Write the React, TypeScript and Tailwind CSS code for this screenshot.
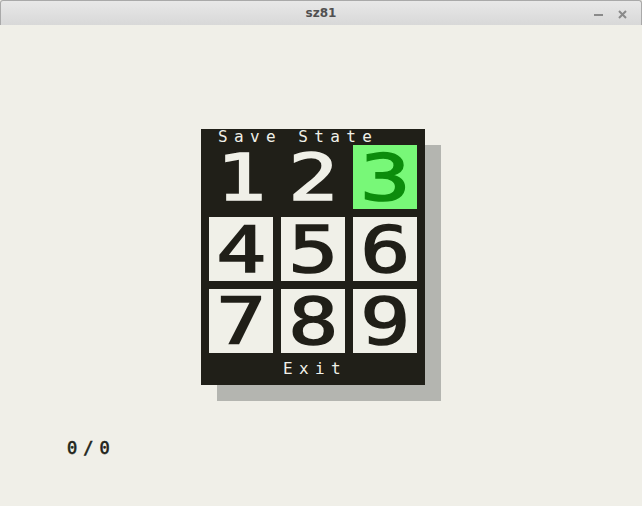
import React from 'react';

const mono = "font-['DejaVu_Sans_Mono','Liberation_Mono',monospace]";

function Tile({ n, variant }: { n: number; variant: 'dark' | 'light' | 'active' }) {
  const tone =
    variant === 'active'
      ? 'bg-[#78f878] text-[#0c8c0c]'
      : variant === 'light'
        ? 'bg-[#f0f0e8] text-[#201f18]'
        : 'bg-[#201f18] text-[#f0f0e8]';
  return (
    <div className={`w-[64px] h-[64px] flex items-center justify-center ${tone}`}>
      <span
        className={`${mono} text-[64px] leading-none scale-x-[1.3] translate-y-[1px] [-webkit-text-stroke:1.6px_currentColor]`}
      >
        {n}
      </span>
    </div>
  );
}

export default function App() {
  const tiles: { n: number; variant: 'dark' | 'light' | 'active' }[] = [
    { n: 1, variant: 'dark' },
    { n: 2, variant: 'dark' },
    { n: 3, variant: 'active' },
    { n: 4, variant: 'light' },
    { n: 5, variant: 'light' },
    { n: 6, variant: 'light' },
    { n: 7, variant: 'light' },
    { n: 8, variant: 'light' },
    { n: 9, variant: 'light' },
  ];

  return (
    <div className="w-[642px] h-[506px] flex flex-col bg-[#f0efe8] overflow-hidden">
      {/* title bar */}
      <div className="h-[25px] shrink-0 relative flex items-center justify-center bg-gradient-to-b from-[#e8e8e8] to-[#d8d8d8] border border-b-0 border-[#a9a9a9] rounded-t-[3px]">
        <span className="font-['DejaVu_Sans',sans-serif] font-bold text-[12px] text-[#505050]">sz81</span>
        <div className="absolute right-[14px] top-0 h-full flex items-center gap-[15px]">
          <span className="block w-[9px] h-[2px] bg-[#8a8a8a] mt-[3px]" />
          <svg width="9" height="9" viewBox="0 0 9 9" className="mt-[2px]">
            <path d="M1 1 L8 8 M8 1 L1 8" stroke="#8a8a8a" strokeWidth="2" />
          </svg>
        </div>
      </div>

      {/* emulator screen */}
      <div className="flex-1 flex flex-col pl-[201px] pt-[104px]">
        <div className="w-[224px] h-[256px] bg-[#201f18] flex flex-col shadow-[16px_16px_0_#b4b5b0]">
          <div className={`h-[16px] pl-[17px] flex items-center text-[16px] leading-none tracking-[6.4px] text-[#f0f0e8] ${mono}`}>
            Save State
          </div>
          <div className="grid grid-cols-3 gap-[8px] px-[8px]">
            {tiles.map((t) => (
              <Tile key={t.n} n={t.n} variant={t.variant} />
            ))}
          </div>
          <div className={`mt-[8px] h-[16px] pl-[82px] flex items-center text-[16px] leading-none tracking-[6.4px] text-[#f0f0e8] ${mono}`}>
            Exit
          </div>
        </div>

        <div className={`mt-[55px] ml-[-134px] h-[16px] flex items-center text-[17px] leading-none tracking-[6px] text-[#201f18] [-webkit-text-stroke:0.6px_currentColor] ${mono}`}>
          0/0
        </div>
      </div>
    </div>
  );
}
